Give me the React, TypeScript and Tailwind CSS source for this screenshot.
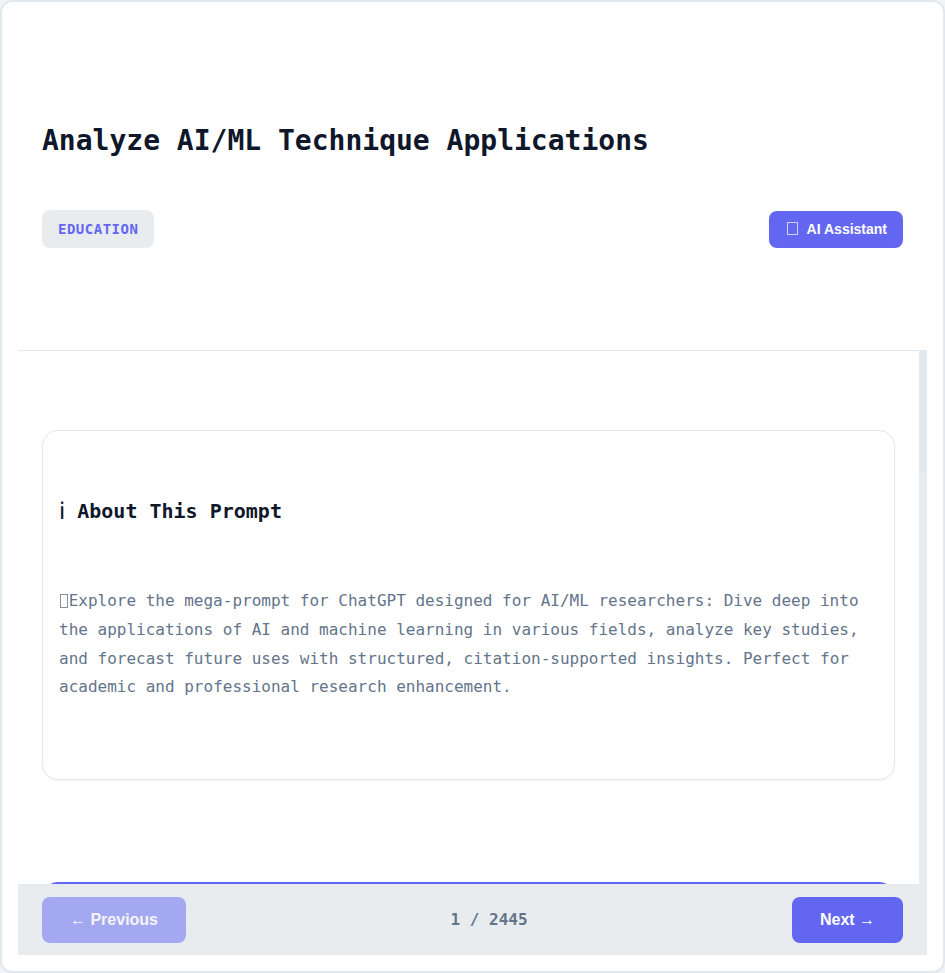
const mono = 'font-["DejaVu_Sans_Mono",monospace]';
const sans = 'font-["Liberation_Sans",sans-serif]';

function Header() {
  return (
    <header className="h-[333px] shrink-0 border-b border-[#e2e8f0] px-6 pt-[100px]">
      <h1 className="text-[28px] leading-[45px] font-bold text-[#0f172a]">
        Analyze AI/ML Technique Applications
      </h1>
      <div className="mt-[47px] flex items-center justify-between">
        <span className="rounded-lg bg-[#e8ecef] px-4 py-2 text-sm leading-[22px] font-semibold tracking-[0.5px] text-[#6366f1] uppercase">
          Education
        </span>
        <button
          className={`${sans} flex h-[37px] items-center rounded-lg bg-[#6366f1] px-4 text-sm font-semibold text-white`}
        >
          <span className="mr-[9px] mb-px ml-[2px] h-[13px] w-[11px] border border-white/70" />
          <span>AI Assistant</span>
        </button>
      </div>
    </header>
  );
}

function AboutCard() {
  return (
    <section className="h-[350px] shrink-0 rounded-2xl border border-[#e2e8f0] bg-white px-4 pt-16 shadow-[0_1px_3px_rgba(0,0,0,0.05)]">
      <h2 className="text-xl leading-8 font-bold text-[#0f172a]">
        <span className={'font-["Noto_Sans","DejaVu_Sans",sans-serif] align-[-1px] text-2xl leading-none font-normal'}>{'\u2139\uFE0E'}</span> About This Prompt
      </h2>
      <p className="mt-[60px] text-base leading-[28.8px] text-[#64748b]">
        <span className="mr-[0.63px] ml-px inline-block h-[14px] w-2 border border-[#64748b]/80 align-[-2px]" />
        Explore the mega-prompt for ChatGPT designed for AI/ML researchers: Dive deep into the
        applications of AI and machine learning in various fields, analyze key studies, and forecast
        future uses with structured, citation-supported insights. Perfect for academic and
        professional research enhancement.
      </p>
    </section>
  );
}

function Footer() {
  return (
    <footer className="flex h-[71px] shrink-0 items-center justify-between border-t border-[#e2e8f0] bg-[#e8ecef] px-6">
      <button className={`${sans} h-[46px] w-36 rounded-lg bg-[#6366f1] text-base font-semibold text-white opacity-50`}>
        ← Previous
      </button>
      <span className="text-base font-semibold text-[#64748b]">1 / 2445</span>
      <button className={`${sans} h-[46px] w-[111px] rounded-lg bg-[#6366f1] text-base font-semibold text-white`}>
        Next →
      </button>
    </footer>
  );
}

export default function App() {
  return (
    <div className={`${mono} h-[973px] w-[945px] bg-[#f1f3f5]`}>
      <main className="flex h-full flex-col rounded-xl border-2 border-[#e2e8f0] bg-white p-4">
        <Header />
        <div className="flex min-h-0 flex-1">
          <div className="flex min-w-0 flex-1 flex-col overflow-hidden px-6 pt-[79px]">
            <AboutCard />
            <section className="mt-[102px] h-60 shrink-0 rounded-2xl border-2 border-[#6366f1] bg-white" />
          </div>
          <div className="w-2 shrink-0 bg-[#e8ecef]">
            <div className="h-[122px] bg-[#e2e8f0]" />
          </div>
        </div>
        <Footer />
      </main>
    </div>
  );
}
